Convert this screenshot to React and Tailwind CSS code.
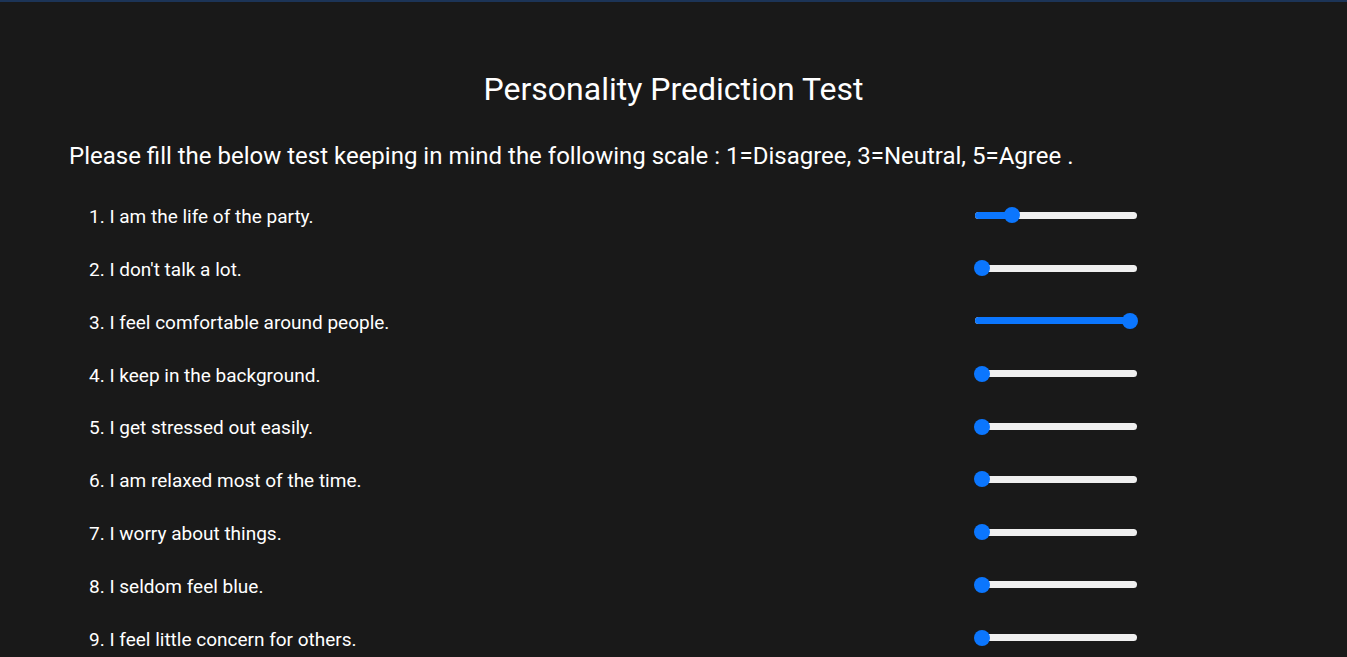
import React from "react";

const questions = [
  { text: "1. I am the life of the party.", value: 0.2 },
  { text: "2. I don't talk a lot.", value: 0 },
  { text: "3. I feel comfortable around people.", value: 1 },
  { text: "4. I keep in the background.", value: 0 },
  { text: "5. I get stressed out easily.", value: 0 },
  { text: "6. I am relaxed most of the time.", value: 0 },
  { text: "7. I worry about things.", value: 0 },
  { text: "8. I seldom feel blue.", value: 0 },
  { text: "9. I feel little concern for others.", value: 0 },
];

const Slider = ({ value }) => {
  // thumb centre moves between 7px and 155px on a 162px track
  const left = 7 + value * 148;
  return (
    <div className="relative w-[162px] h-[16px] mb-[2px] flex items-center">
      <div className="w-full h-[7px] rounded-full bg-[#efefef] overflow-hidden">
        <div className="h-full bg-[#0b76fe]" style={{ width: left + "px" }} />
      </div>
      <div
        className="absolute top-0 w-[16px] h-[16px] rounded-full bg-[#0b76fe]"
        style={{ left: left - 8 + "px" }}
      />
    </div>
  );
};

export default function App() {
  return (
    <div
      className="min-h-screen bg-[#191919] text-white border-t-2 border-[#1c3457]"
      style={{ fontFamily: "Roboto, 'Liberation Sans', sans-serif" }}
    >
      <h1 className="text-center text-[32px] pt-[69px] leading-[36px]">
        Personality Prediction Test
      </h1>

      <p className="pl-[69px] mt-[35px] text-[24px] leading-[28px]">
        Please fill the below test keeping in mind the following scale : 1=Disagree, 3=Neutral, 5=Agree .
      </p>

      <div className="mt-[20px] pl-[89px]">
        {questions.map((q) => (
          <div key={q.text} className="flex items-center h-[52.8px]">
            <div className="w-[886px] text-[19px] mt-[2px]">{q.text}</div>
            <Slider value={q.value} />
          </div>
        ))}
      </div>
    </div>
  );
}
